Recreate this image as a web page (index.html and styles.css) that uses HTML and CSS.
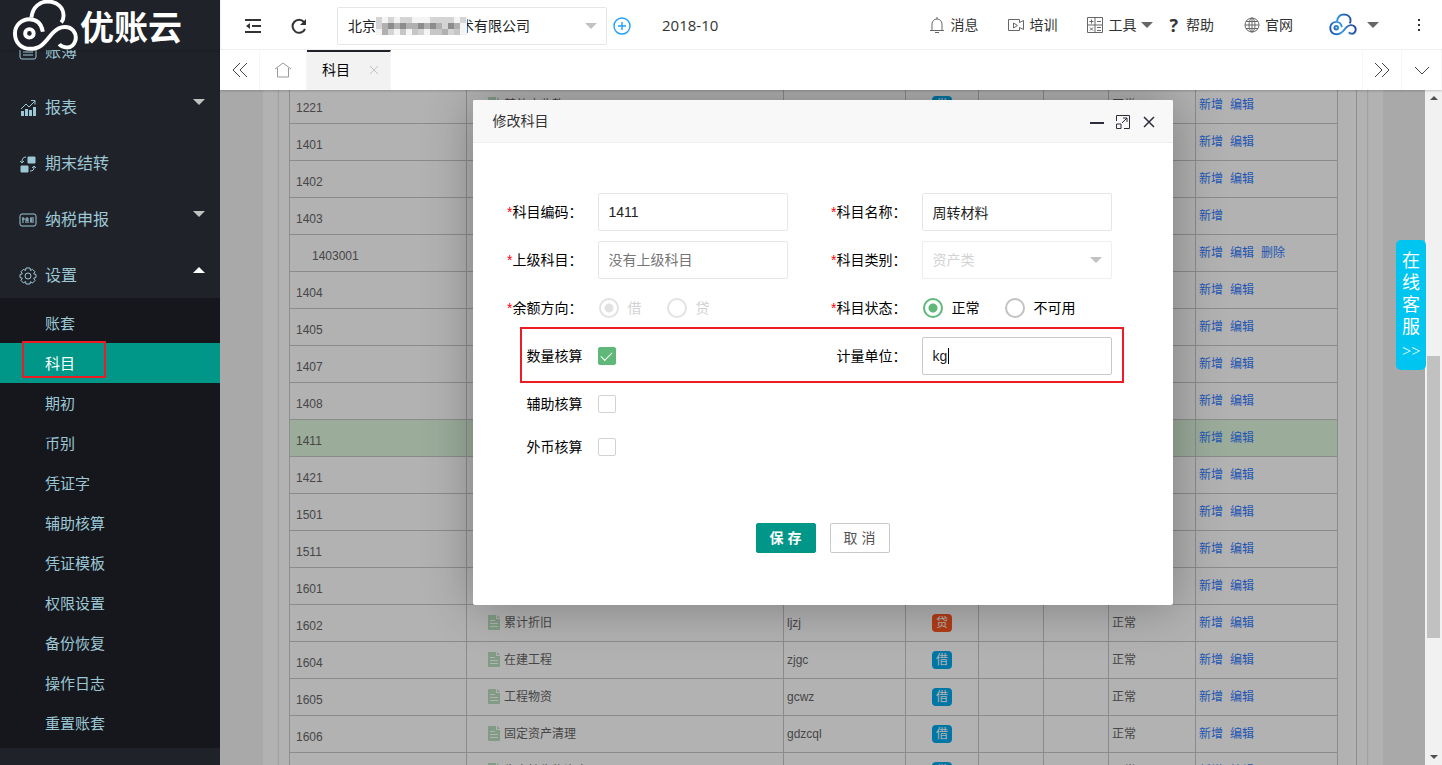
FILE: index.html
```html
<!DOCTYPE html>
<html lang="zh-CN">
<head>
    <meta charset="UTF-8">
    <meta name="viewport" content="width=device-width, initial-scale=1.0">
    <title>优账云 - 科目</title>
    <link rel="stylesheet" href="styles.css">
</head>
<body>
    <svg class="defs" aria-hidden="true">
        <linearGradient id="cloud-blue" gradientUnits="userSpaceOnUse" x1="40" y1="130" x2="230" y2="60">
            <stop offset="0" stop-color="#1f4fa8"/>
            <stop offset=".4" stop-color="#2f9be0"/>
            <stop offset="1" stop-color="#22388f"/>
        </linearGradient>
        <symbol id="cloud" viewBox="34 0 204 160">
            <path d="M93 56C97 22 120 7 143 7C172 7 191 26 191 50C191 60 189 65 184 71"/>
            <path d="M128 99C123 72 106 61 87 61C62 61 43 80 43 104C43 132 62 151 90 151C128 151 140 121 160 101C182 79 208 81 221 96C236 115 226 146 202 147C190 147 183 144 178 137"/>
            <circle cx="87" cy="104" r="13"/>
        </symbol>
        <symbol id="file" viewBox="0 0 12 15">
            <path d="M1 0h7v4h4v10a1 1 0 0 1-1 1H1a1 1 0 0 1-1-1V1a1 1 0 0 1 1-1zM9 0l3 3H9z"/>
            <path class="file-lines" d="M2 5.500h5M2 8.500h8M2 11.500h8"/>
        </symbol>
    </svg>

    <aside class="side">
        <div class="logo">
            <svg class="logo-mark"><use href="#cloud"/></svg>
            <span>优账云</span>
        </div>
        <nav class="menu">
            <ul class="menu-list">
                <li>
                    <a class="menu-item" href="#">
                        <svg viewBox="0 0 18 18"><rect x="1" y="2" width="16" height="14" rx="2"/><path d="M4 6h10M4 9h10M4 12h10"/></svg>
                        账簿
                    </a>
                </li>
                <li>
                    <a class="menu-item" href="#">
                        <svg viewBox="0 0 18 18"><path d="M3.500 17v-5M7.500 17v-7M11.500 17v-6M15.500 17V8" stroke-width="3"/><path d="M2 10l5-5 3 3 6-6M12 1.500h4v4"/></svg>
                        报表
                        <i class="caret"></i>
                    </a>
                </li>
                <li>
                    <a class="menu-item" href="#">
                        <svg viewBox="0 0 18 18"><path class="solid" d="M9 2h7v6H9zM2 11h7v6H2z" /><path d="M7 2C4 2 3 4 3 7M1 6l2 2 2-2M11 16c3 0 4-1 4-4M13 13l2-2 2 2"/></svg>
                        期末结转
                    </a>
                </li>
                <li>
                    <a class="menu-item" href="#">
                        <svg viewBox="0 0 18 18"><rect x="1" y="3" width="16" height="12" rx="2"/><path d="M3 8h3M4 6v6M7 7h2v2H7zM7 12v-3M9 9v3M11 7h4M11 9h4M11 11h4M12 7v4"/></svg>
                        纳税申报
                        <i class="caret"></i>
                    </a>
                </li>
                <li>
                    <a class="menu-item" href="#">
                        <svg viewBox="0 0 18 18"><circle cx="9" cy="9" r="3"/><path d="M7 1h4l.5 2.500 2-1.200 2.500 2.500-1.300 2 2.300.7v3l-2.300.7 1.300 2.300-2.500 2.500-2.100-1.300L11 17H7l-.5-2.400-2.200 1.300-2.300-2.500 1.300-2.200L1 10.500v-3l2.300-.7L2 4.800l2.300-2.500 2.200 1.200z"/></svg>
                        设置
                        <i class="caret caret-up"></i>
                    </a>
                    <ul class="sub">
                        <li><a href="#">账套</a></li>
                        <li class="active"><a href="#">科目</a></li>
                        <li><a href="#">期初</a></li>
                        <li><a href="#">币别</a></li>
                        <li><a href="#">凭证字</a></li>
                        <li><a href="#">辅助核算</a></li>
                        <li><a href="#">凭证模板</a></li>
                        <li><a href="#">权限设置</a></li>
                        <li><a href="#">备份恢复</a></li>
                        <li><a href="#">操作日志</a></li>
                        <li><a href="#">重置账套</a></li>
                    </ul>
                </li>
            </ul>
        </nav>
    </aside>

    <div class="main">
        <header class="header">
            <button class="icon-btn" type="button" aria-label="收起菜单">
                <svg viewBox="0 0 16 16"><path d="M0 2h16M7 8h9M0 14h16" stroke-width="2"/><path class="solid" d="M1 8l4-3v6z" stroke="none"/></svg>
            </button>
            <button class="icon-btn" type="button" aria-label="刷新">
                <svg viewBox="0 0 16 16"><path d="M13 4A6.500 6.500 0 1 0 14 11" stroke-width="2"/><path class="solid" d="M15 1v6H9z" stroke="none"/></svg>
            </button>
            <div class="company">
                <select aria-label="公司">
                    <option>北京　　　　　　术有限公司</option>
                </select>
                <svg class="mosaic" viewBox="0 0 91 18" aria-hidden="true">
                    <path fill="#f4f4f4" d="M0 0h91v18H0z"/>
                    <path fill="#d4d4d4" d="M0 0h6v12H0zM12 0h6v18h-6zM24 0h12v6H24zM42 6h6v12h-6zM54 0h12v6H54zM66 0h12v18H66zM84 0h6v6h-6z"/>
                    <path fill="#b0b0b0" d="M6 6h6v6H6zM18 6h6v6h-6zM30 6h12v6H30zM48 6h6v6h-6zM60 6h6v6h-6zM78 6h6v6h-6zM6 12h6v6H6zM66 12h6v6h-6z"/>
                    <path fill="#8c8c8c" d="M12 6h6v6h-6zM24 6h6v6h-6zM42 6h6v6h-6zM54 6h6v6h-6zM72 6h6v6h-6z"/>
                    <path fill="#c6c6c6" d="M24 12h6v6h-6zM36 12h6v6h-6zM54 12h12v6H54zM78 12h6v6h-6z"/>
                </svg>
                <i class="caret"></i>
            </div>
            <button class="add-btn" type="button" aria-label="新增公司">
                <svg viewBox="0 0 18 18"><circle cx="9" cy="9" r="8"/><path d="M5 9h8M9 5v8"/></svg>
            </button>
            <span class="period">2018-10</span>
            <nav class="tools">
                <a href="#">
                    <svg viewBox="0 0 16 16"><path d="M1 13.500h14M3 13V7a5 5 0 0 1 10 0v6M6 15.500h4M8 0v2"/></svg>
                    消息
                </a>
                <a href="#">
                    <svg viewBox="0 0 16 16"><path d="M11.500 5.500V2.500H.5v11h11v-3l4 2v-9zM5.500 6l4 2.500-4 2.500z"/></svg>
                    培训
                </a>
                <a href="#">
                    <svg viewBox="0 0 16 16"><path d="M.5.5h15v15H.5zM8 .5v15M.5 8h15M2.500 4.500h4M4.500 2.500v4M10 4.500h4M3 10.500l3 3M6 10.500l-3 3M10 10.500h4M10 13.500h4"/></svg>
                    工具
                    <i class="caret caret-dark"></i>
                </a>
                <a class="help" href="#"><b>?</b>帮助</a>
                <a href="#">
                    <svg viewBox="0 0 16 16"><circle cx="8" cy="8" r="7"/><ellipse cx="8" cy="8" rx="3" ry="7"/><path d="M1 8h14M8 1v14M2 4.500h12M2 11.500h12"/></svg>
                    官网
                </a>
                <a class="user" href="#" aria-label="账户">
                    <svg class="user-mark"><use href="#cloud"/></svg>
                    <i class="caret caret-dark"></i>
                </a>
                <button class="more" type="button" aria-label="更多">
                    <svg viewBox="0 0 4 14"><path d="M1 1h2v2H1zM1 6h2v2H1zM1 11h2v2H1z"/></svg>
                </button>
            </nav>
        </header>

        <div class="tabs">
            <button class="tab-ctrl" type="button" aria-label="向左"><svg viewBox="0 0 16 16"><path d="M8 1L1 8l7 7M15 1L8 8l7 7"/></svg></button>
            <a class="tab-home" href="#" aria-label="首页"><svg viewBox="0 0 16 16"><path d="M0 7l8-6 8 6M2.500 6v9h11V6"/></svg></a>
            <a class="tab" href="#">科目
                <svg viewBox="0 0 8 8"><path d="M0 0l8 8M8 0L0 8"/></svg>
            </a>
            <button class="tab-ctrl tab-right" type="button" aria-label="向右"><svg viewBox="0 0 16 16"><path d="M1 1l7 7-7 7M8 1l7 7-7 7"/></svg></button>
            <button class="tab-ctrl" type="button" aria-label="展开"><svg viewBox="0 0 16 16"><path d="M1 5l7 7 7-7"/></svg></button>
        </div>

        <div class="content">
            <div class="page">
                <div class="card">
                    <div class="card-body">
                        <div class="table-view">
                            <table>
                                <colgroup>
                                    <col class="c-code"><col class="c-name"><col class="c-py"><col class="c-dir">
                                    <col class="c-opt"><col class="c-opt"><col class="c-state"><col class="c-act">
                                </colgroup>
                                <tbody>
                                    <tr><td class="code">1221</td><td class="name"><svg><use href="#file"/></svg>其他应收款</td><td>qtysk</td><td class="dir"><span>借</span></td><td></td><td></td><td>正常</td><td class="act"><a href="#">新增</a><a href="#">编辑</a></td></tr>
                                    <tr><td class="code">1401</td><td class="name"><svg><use href="#file"/></svg>材料采购</td><td>clcg</td><td class="dir"><span>借</span></td><td></td><td></td><td>正常</td><td class="act"><a href="#">新增</a><a href="#">编辑</a></td></tr>
                                    <tr><td class="code">1402</td><td class="name"><svg><use href="#file"/></svg>在途物资</td><td>ztwz</td><td class="dir"><span>借</span></td><td></td><td></td><td>正常</td><td class="act"><a href="#">新增</a><a href="#">编辑</a></td></tr>
                                    <tr><td class="code">1403</td><td class="name"><svg><use href="#file"/></svg>原材料</td><td>ycl</td><td class="dir"><span>借</span></td><td></td><td></td><td>正常</td><td class="act"><a href="#">新增</a></td></tr>
                                    <tr><td class="code child">1403001</td><td class="name"><svg><use href="#file"/></svg>材料</td><td>cl</td><td class="dir"><span>借</span></td><td></td><td></td><td>正常</td><td class="act"><a href="#">新增</a><a href="#">编辑</a><a href="#">删除</a></td></tr>
                                    <tr><td class="code">1404</td><td class="name"><svg><use href="#file"/></svg>材料成本差异</td><td>clcbcy</td><td class="dir"><span>借</span></td><td></td><td></td><td>正常</td><td class="act"><a href="#">新增</a><a href="#">编辑</a></td></tr>
                                    <tr><td class="code">1405</td><td class="name"><svg><use href="#file"/></svg>库存商品</td><td>kcsp</td><td class="dir"><span>借</span></td><td></td><td></td><td>正常</td><td class="act"><a href="#">新增</a><a href="#">编辑</a></td></tr>
                                    <tr><td class="code">1407</td><td class="name"><svg><use href="#file"/></svg>商品进销差价</td><td>spjxcj</td><td class="dir"><span class="credit">贷</span></td><td></td><td></td><td>正常</td><td class="act"><a href="#">新增</a><a href="#">编辑</a></td></tr>
                                    <tr><td class="code">1408</td><td class="name"><svg><use href="#file"/></svg>委托加工物资</td><td>wtjgwz</td><td class="dir"><span>借</span></td><td></td><td></td><td>正常</td><td class="act"><a href="#">新增</a><a href="#">编辑</a></td></tr>
                                    <tr class="selected"><td class="code">1411</td><td class="name"><svg><use href="#file"/></svg>周转材料</td><td>zzcl</td><td class="dir"><span>借</span></td><td></td><td></td><td>正常</td><td class="act"><a href="#">新增</a><a href="#">编辑</a></td></tr>
                                    <tr><td class="code">1421</td><td class="name"><svg><use href="#file"/></svg>消耗性生物资产</td><td>xhxswzc</td><td class="dir"><span>借</span></td><td></td><td></td><td>正常</td><td class="act"><a href="#">新增</a><a href="#">编辑</a></td></tr>
                                    <tr><td class="code">1501</td><td class="name"><svg><use href="#file"/></svg>长期债券投资</td><td>cqzqtz</td><td class="dir"><span>借</span></td><td></td><td></td><td>正常</td><td class="act"><a href="#">新增</a><a href="#">编辑</a></td></tr>
                                    <tr><td class="code">1511</td><td class="name"><svg><use href="#file"/></svg>长期股权投资</td><td>cqgqtz</td><td class="dir"><span>借</span></td><td></td><td></td><td>正常</td><td class="act"><a href="#">新增</a><a href="#">编辑</a></td></tr>
                                    <tr><td class="code">1601</td><td class="name"><svg><use href="#file"/></svg>固定资产</td><td>gdzc</td><td class="dir"><span>借</span></td><td></td><td></td><td>正常</td><td class="act"><a href="#">新增</a><a href="#">编辑</a></td></tr>
                                    <tr><td class="code">1602</td><td class="name"><svg><use href="#file"/></svg>累计折旧</td><td>ljzj</td><td class="dir"><span class="credit">贷</span></td><td></td><td></td><td>正常</td><td class="act"><a href="#">新增</a><a href="#">编辑</a></td></tr>
                                    <tr><td class="code">1604</td><td class="name"><svg><use href="#file"/></svg>在建工程</td><td>zjgc</td><td class="dir"><span>借</span></td><td></td><td></td><td>正常</td><td class="act"><a href="#">新增</a><a href="#">编辑</a></td></tr>
                                    <tr><td class="code">1605</td><td class="name"><svg><use href="#file"/></svg>工程物资</td><td>gcwz</td><td class="dir"><span>借</span></td><td></td><td></td><td>正常</td><td class="act"><a href="#">新增</a><a href="#">编辑</a></td></tr>
                                    <tr><td class="code">1606</td><td class="name"><svg><use href="#file"/></svg>固定资产清理</td><td>gdzcql</td><td class="dir"><span>借</span></td><td></td><td></td><td>正常</td><td class="act"><a href="#">新增</a><a href="#">编辑</a></td></tr>
                                    <tr><td class="code">1621</td><td class="name"><svg><use href="#file"/></svg>生产性生物资产</td><td>scxswzc</td><td class="dir"><span>借</span></td><td></td><td></td><td>正常</td><td class="act"><a href="#">新增</a><a href="#">编辑</a></td></tr>
                                </tbody>
                            </table>
                        </div>
                    </div>
                </div>
            </div>

            <div class="scrollbar" aria-hidden="true">
                <i class="sb-arrow"></i>
                <span class="sb-track"><span class="sb-thumb"></span></span>
                <i class="sb-arrow sb-down"></i>
            </div>

            <div class="shade">
                <form class="modal" role="dialog" aria-labelledby="modal-title">
                    <div class="modal-head">
                        <h2 id="modal-title">修改科目</h2>
                        <button type="button" aria-label="最小化"><svg viewBox="0 0 14 14"><path d="M0 8h14" stroke-width="2"/></svg></button>
                        <button type="button" aria-label="最大化"><svg viewBox="0 0 14 14"><path d="M.5 6V.5h13v13H8M.5 9h4.500v4.500H.5zM6 8l5-5M7 3h4v4"/></svg></button>
                        <button type="button" aria-label="关闭"><svg viewBox="0 0 14 14"><path d="M2 2l10 10M12 2L2 12" stroke-width="1.500"/></svg></button>
                    </div>
                    <div class="modal-body">
                        <div class="row">
                            <label for="code"><em>*</em>科目编码：</label>
                            <input class="field" id="code" type="text" value="1411">
                            <label for="name"><em>*</em>科目名称：</label>
                            <input class="field" id="name" type="text" value="周转材料">
                        </div>
                        <div class="row">
                            <label for="parent"><em>*</em>上级科目：</label>
                            <input class="field" id="parent" type="text" placeholder="没有上级科目">
                            <label for="type"><em>*</em>科目类别：</label>
                            <div class="field-wrap">
                                <select class="field" id="type" disabled><option>资产类</option></select>
                                <i class="caret"></i>
                            </div>
                        </div>
                        <div class="row">
                            <span class="label"><em>*</em>余额方向：</span>
                            <div class="radios">
                                <label><input type="radio" name="dir" checked disabled>借</label>
                                <label><input type="radio" name="dir" disabled>贷</label>
                            </div>
                            <span class="label"><em>*</em>科目状态：</span>
                            <div class="radios">
                                <label><input type="radio" name="state" checked>正常</label>
                                <label><input type="radio" name="state">不可用</label>
                            </div>
                        </div>
                        <div class="row marked">
                            <label for="qty">数量核算</label>
                            <input class="check" id="qty" type="checkbox" checked>
                            <label for="unit">计量单位：</label>
                            <div class="field-wrap">
                                <input class="field" id="unit" type="text" value="kg" autofocus>
                                <i class="cursor"></i>
                            </div>
                        </div>
                        <div class="row">
                            <label for="aux">辅助核算</label>
                            <input class="check" id="aux" type="checkbox">
                        </div>
                        <div class="row row-short">
                            <label for="currency">外币核算</label>
                            <input class="check" id="currency" type="checkbox">
                        </div>
                        <div class="actions">
                            <button class="btn btn-primary" type="button">保 存</button>
                            <button class="btn" type="button">取 消</button>
                        </div>
                    </div>
                </form>
            </div>
        </div>
    </div>

    <a class="service" href="#">在线客服<span>&gt;&gt;</span></a>
</body>
</html>
```
FILE: styles.css
```css
*,
*::after {
    box-sizing: border-box;
}
body {
    display: flex;
    height: 100vh;
    margin: 0;
    overflow: hidden;
    font: 14px/20px "Liberation Sans", "Noto Sans CJK SC", sans-serif;
    color: #333;
    background: #f2f2f2;
}
a {
    color: inherit;
    text-decoration: none;
}
ul {
    margin: 0;
    padding: 0;
    list-style: none;
}
button {
    padding: 0;
    border: 0;
    background: none;
    font: inherit;
    color: inherit;
}
svg {
    flex: none;
    fill: none;
    stroke: currentColor;
}
.defs {
    position: absolute;
    width: 0;
    height: 0;
}
.solid {
    fill: currentColor;
}
.caret {
    border: 6px solid transparent;
    border-top-color: #c2c2c2;
    border-bottom-width: 0;
}
.caret-up {
    border-width: 0 6px 6px;
    border-bottom-color: #fff;
}
.caret-dark {
    border-top-color: #666;
}

/* sidebar */
.side {
    display: flex;
    flex-direction: column;
    flex: none;
    width: 220px;
    background: #20222a;
    color: #9cc8d6;
}
.logo {
    display: flex;
    align-items: center;
    gap: 1px;
    height: 50px;
    padding-left: 12px;
    box-shadow: 0 1px 2px rgba(0, 0, 0, .15);
    font-size: 34px;
    font-weight: bold;
    line-height: 44px;
    color: #fff;
    position: relative;
    z-index: 1;
}
.logo span {
    padding-top: 6px;
}
.logo-mark {
    width: 67px;
    height: 53px;
    stroke-width: 12;
}
.menu {
    flex: 1;
    overflow: hidden;
}
.menu-list {
    margin-top: -32px;
}
.menu-item {
    display: flex;
    align-items: center;
    gap: 8px;
    height: 56px;
    padding: 12px 15px 0 19px;
    font-size: 16px;
}
.menu-item svg {
    width: 18px;
    height: 18px;
}
.menu-item .caret {
    margin: 0 0 12px auto;
}
.sub {
    padding: 5px 0;
    background: rgba(0, 0, 0, .3);
}
.sub li {
    height: 40px;
    padding-left: 45px;
    font-size: 15px;
    line-height: 42px;
}
.sub a {
    display: block;
}
.sub .active {
    position: relative;
    background: #009688;
    color: #fff;
}
.sub .active::after {
    content: "";
    position: absolute;
    top: -2px;
    left: 22px;
    width: 84px;
    height: 37px;
    border: 2px solid #ed1c24;
}

/* header */
.main {
    display: flex;
    flex-direction: column;
    flex: 1;
    min-width: 0;
}
.header {
    display: flex;
    align-items: center;
    height: 50px;
    padding: 2px 17px 0 25px;
    border-bottom: 1px solid #f2f2f2;
    background: #fff;
}
.icon-btn {
    display: flex;
    margin-right: 30px;
}
.icon-btn svg {
    width: 16px;
    height: 16px;
}
.company {
    position: relative;
    width: 270px;
}
.company select {
    width: 100%;
    height: 38px;
    padding: 0 10px;
    border: 1px solid #e6e6e6;
    border-radius: 2px;
    appearance: none;
    background: #fff;
    font: inherit;
    color: #222;
}
.company .caret,
.field-wrap .caret {
    position: absolute;
    top: 16px;
    right: 10px;
}
.mosaic {
    position: absolute;
    top: 10px;
    left: 39px;
    width: 91px;
    height: 18px;
    stroke: none;
}
.add-btn {
    display: flex;
    margin: 0 31px 0 6px;
    color: #1e9fff;
}
.add-btn svg {
    width: 18px;
    height: 18px;
    stroke-width: 1.4;
}
.period {
    padding-bottom: 2px;
    font: 15px/20px "Open Sans", sans-serif;
}
.tools {
    display: flex;
    align-items: center;
    gap: 30px;
    margin-left: auto;
    padding-bottom: 2px;
}
.tools a {
    display: flex;
    align-items: center;
    gap: 5px;
}
.tools svg {
    width: 16px;
    height: 16px;
    stroke: #666;
}
.tools .help {
    gap: 8px;
    margin-left: -14px;
}
.help b {
    font: bold 18px/20px "Open Sans", sans-serif;
}
.tools .user {
    gap: 10px;
    padding-left: 6px;
}
.tools .user-mark {
    width: 28px;
    height: 23px;
    stroke: url(#cloud-blue);
    stroke-width: 14;
}
.more {
    display: flex;
    padding: 0 4px;
    margin-left: 4px;
}
.tools .more svg {
    width: 4px;
    height: 14px;
    fill: #333;
    stroke: none;
}

/* tabs */
.tabs {
    display: flex;
    height: 40px;
    background: #fff;
    box-shadow: 0 1px 2px rgba(0, 0, 0, .2);
    position: relative;
    z-index: 1;
}
.tabs > * {
    display: flex;
    align-items: center;
    justify-content: center;
    border-right: 1px solid #f6f6f6;
    color: #444;
}
.tab-ctrl {
    width: 40px;
}
.tab-ctrl svg,
.tab-home svg {
    width: 16px;
    height: 16px;
}
.tab-home {
    width: 47px;
}
.tab-home svg {
    color: #999;
}
.tabs .tab {
    justify-content: space-between;
    width: 84px;
    padding: 0 12px 2px 15px;
    border-top: 2px solid #20222a;
    background: #f2f2f2;
    color: #000;
}
.tab svg {
    width: 8px;
    height: 8px;
    overflow: visible;
    color: #c2c2c2;
}
.tab-right {
    margin-left: auto;
    border-left: 1px solid #f6f6f6;
}

/* subject table */
.content {
    display: flex;
    flex: 1;
    min-height: 0;
    position: relative;
    overflow: hidden;
}
.page {
    flex: 1;
    padding: 0 42px 0 43px;
}
.card {
    padding: 0 16px;
    background: #fff;
}
.card-body {
    padding: 0 10px;
    box-shadow: 0 0 2px rgba(0, 0, 0, .3);
}
.table-view {
    border: solid #ccc;
    border-width: 0 1px;
}
.table-view table {
    width: 1048px;
    margin-top: -3px;
    border-spacing: 0;
    table-layout: fixed;
    font-size: 12px;
    color: #666;
}
.c-code { width: 177px; }
.c-name { width: 317px; }
.c-py { width: 122px; }
.c-dir { width: 73px; }
.c-opt { width: 65px; }
.c-state { width: 87px; }
.c-act { width: 142px; }
td {
    height: 37px;
    padding: 0 3px;
    border: solid #c8c8c8;
    border-width: 0 1px 1px 0;
}
.selected {
    background: #dff7df;
}
.code {
    padding: 6px 6px 0;
}
.child {
    padding-left: 22px;
}
.name svg {
    width: 12px;
    height: 15px;
    margin: -2px 4px 0 18px;
    fill: #b9dfbd;
    stroke: none;
    vertical-align: middle;
}
.file-lines {
    stroke: #fff;
}
.dir {
    text-align: center;
}
.dir span {
    display: block;
    width: 20px;
    height: 18px;
    margin: 0 auto;
    border-radius: 4px;
    background: #01aaed;
    line-height: 18px;
    color: #fff;
}
.dir .credit {
    background: #ff5722;
}
.act a {
    margin-right: 7px;
    color: #337dff;
}
.scrollbar {
    display: flex;
    flex-direction: column;
    align-items: center;
    justify-content: space-between;
    width: 17px;
    padding: 6px 0;
    background: #f1f1f1;
}
.sb-arrow {
    border: 4px solid transparent;
    border-top-width: 0;
    border-bottom-color: #505050;
}
.sb-down {
    border-width: 4px 4px 0;
    border-top-color: #505050;
}
.sb-track {
    display: flex;
    flex-direction: column;
    flex: 1;
    width: 13px;
    padding: 256px 0 117px;
}
.sb-thumb {
    flex: 1;
    background: #c1c1c1;
}

/* edit dialog */
.shade {
    display: flex;
    align-items: flex-start;
    justify-content: center;
    position: absolute;
    inset: 0 17px 0 0;
    padding-top: 10px;
    overflow: hidden;
    background: rgba(0, 0, 0, .3);
}
.modal {
    width: 700px;
    border-radius: 2px;
    background: #fff;
    box-shadow: 1px 1px 50px rgba(0, 0, 0, .3);
    color: #000;
}
.modal-head {
    display: flex;
    align-items: center;
    gap: 12px;
    height: 43px;
    padding: 0 17px 0 20px;
    border-bottom: 1px solid #eee;
    border-radius: 2px 2px 0 0;
    background: #f8f8f8;
    color: #2e2d3c;
}
.modal-head h2 {
    margin: 0 auto 0 0;
    font-size: 14px;
    font-weight: normal;
    color: #333;
}
.modal-head button {
    display: flex;
    padding-top: 2px;
}
.modal-head svg {
    width: 14px;
    height: 14px;
}
.modal-body {
    display: flex;
    flex-direction: column;
    gap: 10px;
    padding: 50px 61px 52px 0;
}
.row {
    display: grid;
    grid-template-columns: 125px 190px 134px 190px;
    align-items: center;
    min-height: 38px;
}
.row-short {
    min-height: 28px;
}
.row > label,
.label {
    padding-right: 15px;
    text-align: right;
}
em {
    font-style: normal;
    color: #f00;
}
.marked {
    position: relative;
}
.marked::after {
    content: "";
    position: absolute;
    top: -10px;
    right: -12px;
    bottom: -8px;
    left: 47px;
    border: 2px solid #ed1c24;
    pointer-events: none;
}
.field {
    width: 100%;
    height: 38px;
    padding: 0 10px;
    border: 1px solid #e6e6e6;
    border-radius: 2px;
    outline: 0;
    appearance: none;
    background: #fff;
    font: inherit;
    color: #222;
}
.field:focus {
    border-color: #c9c9c9;
    caret-color: transparent;
}
.field::placeholder {
    color: #757575;
}
.field:disabled {
    border-color: #eee;
    color: #d2d2d2;
    opacity: 1;
}
.field-wrap {
    position: relative;
}
.cursor {
    position: absolute;
    top: 11px;
    left: 26px;
    width: 1px;
    height: 16px;
    background: #000;
}
.radios {
    display: flex;
    gap: 25px;
    padding-left: 1px;
}
.radios label {
    display: flex;
    align-items: center;
    gap: 9px;
}
.radios input {
    width: 20px;
    height: 20px;
    margin: 0;
    border: 2px solid #c2c2c2;
    border-radius: 50%;
    appearance: none;
}
.radios input:checked {
    border-color: #5fb878;
    background: radial-gradient(circle, #5fb878 4px, transparent 5px);
}
.radios label:has(:disabled) {
    color: #d2d2d2;
}
.radios input:disabled {
    border-color: #e2e2e2;
}
.radios input:disabled:checked {
    background: radial-gradient(circle, #e2e2e2 4px, transparent 5px);
}
.check {
    display: grid;
    place-items: center;
    width: 18px;
    height: 18px;
    margin: 0;
    border: 1px solid #d2d2d2;
    border-radius: 2px;
    appearance: none;
}
.check:checked {
    border-color: #5fb878;
    background: #5fb878;
}
.check:checked::after {
    content: "";
    width: 11px;
    height: 6px;
    margin-bottom: 3px;
    border: solid #fff;
    border-width: 0 0 1px 1px;
    transform: rotate(-45deg);
}
.actions {
    display: flex;
    gap: 14px;
    padding: 52px 0 0 283px;
}
.btn {
    width: 60px;
    height: 30px;
    border: 1px solid #c9c9c9;
    border-radius: 2px;
    color: #555;
}
.btn-primary {
    border-color: #009688;
    background: #009688;
    font-weight: bold;
    color: #fff;
}

/* online service */
.service {
    position: fixed;
    top: 240px;
    right: 16px;
    z-index: 2;
    width: 30px;
    padding: 10px 6px 6px;
    border-radius: 5px;
    background: #00c5f1;
    font-size: 18px;
    line-height: 22px;
    color: #fff;
}
.service span {
    display: block;
    font: 300 16px/26px "Open Sans", sans-serif;
}
```
